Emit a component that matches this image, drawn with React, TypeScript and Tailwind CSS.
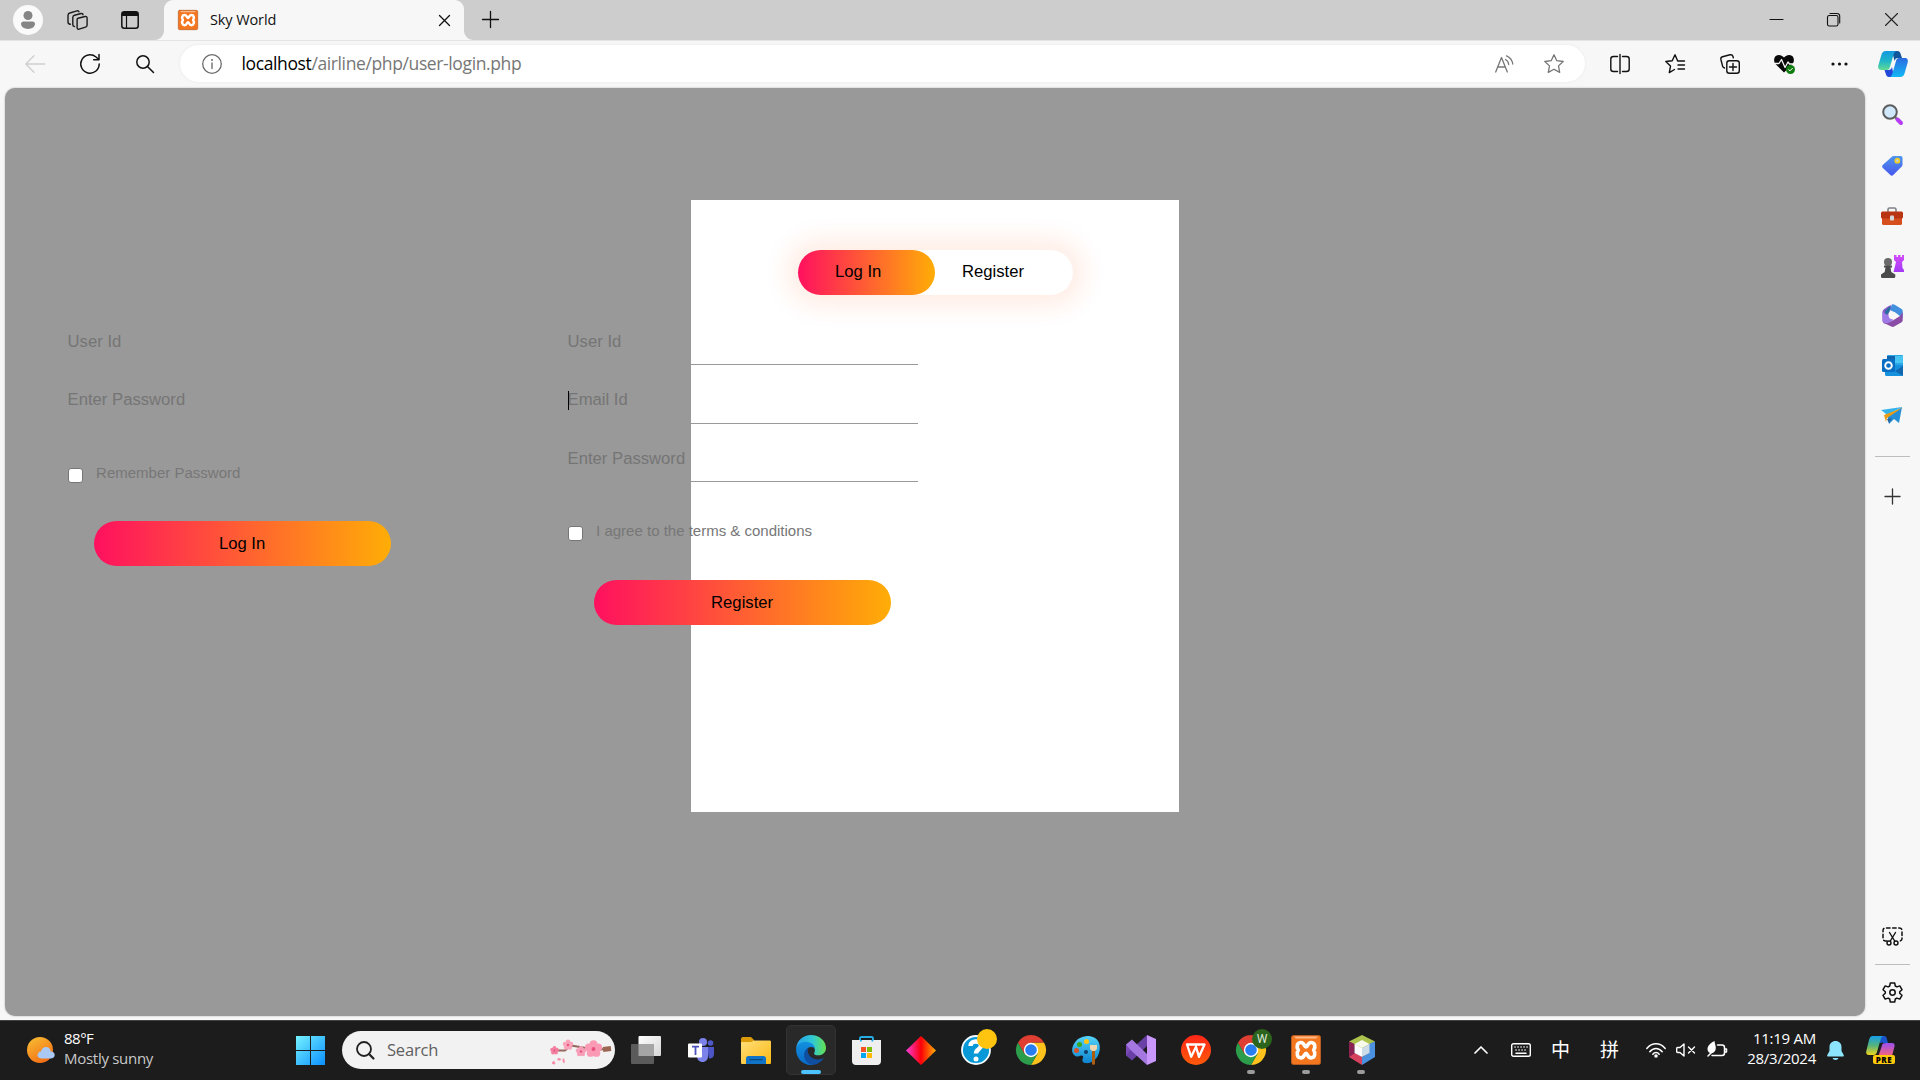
import React from "react";

type IconProps = { w: number; h: number; children: React.ReactNode; className?: string; box?: string };

function Icon({ w, h, children, className = "", box }: IconProps) {
  return (
    <svg
      width={w}
      height={h}
      viewBox={box ?? `0 0 ${w} ${h}`}
      fill="none"
      stroke="none"
      strokeLinecap="round"
      strokeLinejoin="round"
      className={`block shrink-0 overflow-visible ${className}`}
    >
      {children}
    </svg>
  );
}

function XamppIcon({ size }: { size: number }) {
  return (
    <Icon w={size} h={size} box="0 0 30 30">
      <rect x="0.5" y="0.5" width="29" height="29" rx="2" fill="#f4771f" stroke="#b65c22" />
      <path d="M3 1.500h24l-2 2H5z" fill="#fbb98a" />
      <path
        d="M15 12C13.300 12 13.500 7.500 10 7.500 6.300 7.500 5 11.500 7.300 15 5 18.500 6.300 22.800 10 22.800 13.500 22.800 13.300 18.300 15 18.300 16.700 18.300 16.500 22.800 20 22.800 23.700 22.800 25 18.500 22.700 15 25 11.500 23.700 7.500 20 7.500 16.500 7.500 16.700 12 15 12z"
        stroke="#fff"
        strokeWidth="3.700"
      />
    </Icon>
  );
}

function ChromeIcon() {
  return (
    <Icon w={30} h={30}>
      <path d="M15 7.500h13A15 15 0 0 1 15 30l6.500-11.200z" fill="#fdc21c" />
      <path d="M8.500 18.800 2 7.500A15 15 0 0 0 15 30l6.500-11.200z" fill="#2c9e4b" />
      <path d="M2 7.500 8.500 18.800 15 15V7.500h13A15 15 0 0 0 2 7.500z" fill="#df3f32" />
      <circle cx="15" cy="15" r="7.200" fill="#fff" />
      <circle cx="15" cy="15" r="5.800" fill="#287df0" />
    </Icon>
  );
}

function CopilotIcon() {
  return (
    <Icon w={30} h={26}>
      <defs>
        <linearGradient id="cpa" x1="0" y1="0" x2="0" y2="1">
          <stop stopColor="#1498df" />
          <stop offset=".55" stopColor="#22b7c7" />
          <stop offset="1" stopColor="#62dc92" />
        </linearGradient>
        <linearGradient id="cpb" x1="0" y1="0" x2="0" y2="1">
          <stop stopColor="#2b6be0" />
          <stop offset="1" stopColor="#12b8f5" />
        </linearGradient>
      </defs>
      <path d="M14 0h5.500c1.800 0 2.500 1 3 2.500L24 7h-4c-2 0-3 1-3.500 3z" fill="#14569c" />
      <path d="M16 26h-5c-1.800 0-2.500-1-3-2.500L6.500 19h4c2 0 3-1 3.500-3z" fill="#2148d8" />
      <path d="M8 0h11c-2 0-2.800 1.500-3.400 3.400L12 16c-.6 2-1.500 3-3.500 3H3.300C.5 19-.3 17 .3 14.600l2.900-10C4 1.500 5 0 8 0z" fill="url(#cpa)" />
      <path d="M22 26H11c2 0 2.800-1.500 3.400-3.400L18 10c.6-2 1.500-3 3.500-3h5.200c2.800 0 3.600 2 3 4.400l-2.900 10C26 24.500 25 26 22 26z" fill="url(#cpb)" />
    </Icon>
  );
}

function WindowTop() {
  return (
    <div className="flex h-10 shrink-0 items-stretch bg-[#cdcdcd]">
      <div className="flex w-[164px] items-center pl-[13px]">
        <Icon w={30} h={30}>
          <circle cx="15" cy="15" r="15" fill="#fafafa" />
          <circle cx="15" cy="10.500" r="4.500" fill="#858585" />
          <path d="M10.500 16.500h9c1.500 0 2.500 1 2.500 2.300 0 3-3 5.200-7 5.200s-7-2.200-7-5.200c0-1.300 1-2.300 2.500-2.300z" fill="#858585" />
        </Icon>
        <Icon w={21} h={20} className="ml-6">
          <g stroke="#1b1b1b" strokeWidth="1.400">
            <path d="m11 8.200 7.200-1.700c1.200-.3 1.900.3 1.900 1.500v7c0 1.200-.5 1.800-1.500 2.100l-6.500 2c-1.200.4-2-.2-2-1.400V9.500c0-.8.200-1.200.9-1.300z" />
            <path d="M7.500 16.500c-1.200 0-1.700-.6-1.700-1.700V7.500c0-1.300.5-2 1.700-2.300l6.500-1.700c1-.2 1.800.2 2 1.200" />
            <path d="M3.300 14.300c-1.500-.2-2.300-.8-2.300-2V5.500c0-1.300.6-2.200 1.800-2.500L10 .9c1-.3 1.700.1 2 1" />
          </g>
        </Icon>
        <Icon w={18} h={18} className="ml-[33px]">
          <rect x=".8" y=".8" width="16.400" height="16.400" rx="2.500" stroke="#111" strokeWidth="1.500" />
          <path d="M1 4V2.500C1 1.500 1.700 1 2.500 1h13c1 0 1.500.6 1.500 1.500V5H1z" fill="#111" />
          <path d="M5.500 5v12" stroke="#111" strokeWidth="1.200" />
        </Icon>
      </div>
      <div className="relative flex w-[300px] items-center rounded-t-[9px] bg-[#f7f7f7] pl-[14px] pr-[14px]">
        <svg className="absolute bottom-0 -left-[9px]" width="9" height="9">
          <path d="M9 0v9H0a9 9 0 0 0 9-9z" fill="#f7f7f7" />
        </svg>
        <svg className="absolute bottom-0 -right-[9px]" width="9" height="9">
          <path d="M0 0v9h9a9 9 0 0 1-9-9z" fill="#f7f7f7" />
        </svg>
        <XamppIcon size={20} />
        <span className="ml-3 text-[14.500px] tracking-[-0.100px] text-[#111]">Sky World</span>
        <Icon w={11} h={11} className="ml-auto">
          <path d="m.5.500 10 10m0-10-10 10" stroke="#111" strokeWidth="1.300" />
        </Icon>
      </div>
      <Icon w={17} h={17} className="ml-[18px] mt-[11px]">
        <path d="M8.500.500v16m-8-8h16" stroke="#111" strokeWidth="1.300" />
      </Icon>
      <div className="ml-auto flex items-center pr-[22px] pb-px">
        <Icon w={13} h={13}>
          <path d="M0 6.500h13" stroke="#111" strokeWidth="1.100" />
        </Icon>
        <Icon w={13} h={13} className="ml-11">
          <rect x=".5" y="2.500" width="10.500" height="10.500" rx="1.800" stroke="#111" strokeWidth="1.100" />
          <path d="M3 .5h7a2.600 2.600 0 0 1 2.700 2.700V10" stroke="#111" strokeWidth="1.100" />
        </Icon>
        <Icon w={13} h={13} className="ml-[45px]">
          <path d="m.5.500 12 12m0-12-12 12" stroke="#222" strokeWidth="1.100" />
        </Icon>
      </div>
    </div>
  );
}

function Slot({ className, children }: { className: string; children: React.ReactNode }) {
  return <div className={`flex shrink-0 items-center justify-center ${className}`}>{children}</div>;
}

function Toolbar() {
  return (
    <div className="flex h-12 shrink-0 items-center border-t border-[#e4e4e4] bg-[#f7f7f7] pb-[2px]">
      <Slot className="ml-[10px] w-[50px]">
        <Icon w={20} h={18}>
          <path d="M19.500 9H.8M9 .8.800 9 9 17.200" stroke="#cfcfcf" strokeWidth="1.400" />
        </Icon>
      </Slot>
      <Slot className="w-[60px]">
        <Icon w={20} h={20}>
          <path d="M19.200 10A9.200 9.200 0 1 1 16 3l2.800 2.500M19 .5v5.300h-5.300" stroke="#111" strokeWidth="1.500" />
        </Icon>
      </Slot>
      <Slot className="w-[50px]">
        <Icon w={18} h={18}>
          <circle cx="7" cy="7" r="6.200" stroke="#111" strokeWidth="1.500" />
          <path d="m11.500 11.500 6 6" stroke="#111" strokeWidth="1.500" />
        </Icon>
      </Slot>
      <div className="ml-[10px] flex h-[37px] w-[1405px] items-center rounded-full bg-white pl-[22px] shadow-[0_0_3px_#e8e8e8]">
        <Icon w={20} h={20}>
          <circle cx="10" cy="10" r="9.300" stroke="#6e6e6e" strokeWidth="1.300" />
          <path d="M10 9v5.500" stroke="#6e6e6e" strokeWidth="1.400" />
          <circle cx="10" cy="6" r="1" fill="#6e6e6e" />
        </Icon>
        <span className="ml-[19.500px] text-[17.500px] tracking-[-0.380px] text-[#767676]">
          <span className="text-black">localhost</span>/airline/php/user-login.php
        </span>
        <div className="ml-auto flex items-center pr-[21px]">
          <Icon w={19} h={18} className="mr-[30px]">
            <path d="M.7 17 6.500 2.500 12.300 17M2.700 12h7.600" stroke="#767676" strokeWidth="1.300" />
            <path d="M10.500 4.500c2 1 3 2.700 3.200 5M11.500.800c3.600 1.500 5.700 4.500 6.300 8.200" stroke="#767676" strokeWidth="1.300" />
          </Icon>
          <Icon w={20} h={20}>
            <path d="m10 .8 2.800 5.900 6.400.8-4.700 4.400 1.200 6.500-5.700-3.200-5.700 3.200 1.200-6.500L.8 7.500l6.400-.8z" stroke="#767676" strokeWidth="1.300" />
          </Icon>
        </div>
      </div>
      <Slot className="ml-[7px] w-[55px]">
        <Icon w={20} h={20}>
          <path d="M7.500 2.500h-4C1.800 2.500.8 3.500.8 5v10c0 1.500 1 2.500 2.700 2.500h4M12.500 2.500h4c1.700 0 2.700 1 2.700 2.500v10c0 1.500-1 2.500-2.700 2.500h-4M10 .5v19" stroke="#111" strokeWidth="1.400" />
        </Icon>
      </Slot>
      <Slot className="w-[55px]">
        <Icon w={20} h={20}>
          <path d="M12.700 7 10 .8 7.200 6.700.8 7.500l4.700 4.600-1.200 6.500L9.500 15.500M13.500 7h6M13 11h6.500M13 15h6.500" stroke="#111" strokeWidth="1.400" />
        </Icon>
      </Slot>
      <Slot className="w-[55px]">
        <Icon w={20} h={20}>
          <rect x="6.800" y="6.800" width="12.500" height="12.500" rx="2.500" stroke="#111" strokeWidth="1.400" />
          <path d="M13 9.500v7M9.500 13h7M4.500 14c-1-.2-1.700-.8-1.900-1.800L.9 5.500C.600 4 1.200 3 2.500 2.700L10 .8c1.500-.3 2.600.3 3 1.700l.3 1.300" stroke="#111" strokeWidth="1.400" />
        </Icon>
      </Slot>
      <Slot className="w-[55px]">
        <Icon w={21} h={20}>
          <path d="M10 18.500 1.500 10C-.5 7.500-.3 4 1.800 2 4.200.200 7.500.500 10 3.500 12.500.500 15.800.200 18.200 2c2.100 2 2.300 5.500.3 8z" fill="#080808" />
          <path d="M1 9.500h4l2.500-4 3.500 8 3-5.500 1.500 2H19" stroke="#f7f7f7" strokeWidth="1.300" />
          <circle cx="16.500" cy="15.500" r="4.500" fill="#107c10" />
          <path d="m14.700 15.700 1.200 1.200 2.500-2.600" stroke="#fff" strokeWidth="1" />
        </Icon>
      </Slot>
      <Slot className="w-[55px]">
        <Icon w={17} h={4}>
          <circle cx="2" cy="2" r="1.600" fill="#111" />
          <circle cx="8.500" cy="2" r="1.600" fill="#111" />
          <circle cx="15" cy="2" r="1.600" fill="#111" />
        </Icon>
      </Slot>
      <Slot className="w-[51px]">
        <CopilotIcon />
      </Slot>
    </div>
  );
}

function GradientButton({ label }: { label: string }) {
  return (
    <button className="ml-[26px] h-[45px] w-[297px] rounded-full bg-[linear-gradient(to_right,#ff105f,#ffad06)] text-[16.670px] text-black">
      {label}
    </button>
  );
}

function Field({ label, caret = false }: { label: string; caret?: boolean }) {
  return (
    <div className="flex h-[58.670px] w-[350px] items-end border-b border-[#999]">
      <div className="relative mb-[11.400px] h-[23px] leading-[23px]">
        {caret && <span className="absolute left-[0.400px] top-[3px] h-[19px] w-px bg-black" />}
        {label}
      </div>
    </div>
  );
}

function Form({ fields, check, action, caretAt }: { fields: string[]; check: string; action: string; caretAt?: number }) {
  return (
    <form className="w-[350px] text-[16.670px] text-[#757575]">
      {fields.map((f, i) => (
        <Field key={f} label={f} caret={i === caretAt} />
      ))}
      <div className="mt-[37px] flex h-[38px] items-start">
        <span className="mt-[7px] h-[15px] w-[15px] rounded-[3px] border border-[#767676] bg-white" />
        <span className="mt-px ml-[13.500px] text-[15px] leading-[22px] text-[#777]">{check}</span>
      </div>
      <div className="mt-[22.500px]">
        <GradientButton label={action} />
      </div>
    </form>
  );
}

function PageView() {
  return (
    <main className="relative ml-[5px] mb-1 w-[1860px] overflow-hidden rounded-[10px] bg-[#999] pt-[112px] font-['Liberation_Sans',Arial,sans-serif] shadow-[0_0_2px_#aaa]">
      <section className="ml-[686px] h-[612px] w-[488px] bg-white pt-[50px]">
        <div className="mx-auto flex h-[45px] w-[275px] rounded-full text-[16.670px] text-black shadow-[0_0_25px_11px_#ff61241f]">
          <div className="h-[45px] w-[137px] rounded-full bg-[linear-gradient(to_right,#ff105f,#ffad06)] pl-[37.500px] leading-[43px]">Log In</div>
          <div className="pl-[27.500px] leading-[43px]">Register</div>
        </div>
      </section>
      <div className="absolute left-[62.600px] top-[218.300px] flex gap-[150px]">
        <Form fields={["User Id", "Enter Password"]} check="Remember Password" action="Log In" />
        <Form fields={["User Id", "Email Id", "Enter Password"]} check="I agree to the terms & conditions" action="Register" caretAt={1} />
      </div>
    </main>
  );
}

function Sidebar() {
  return (
    <aside className="flex w-[54px] flex-col items-center">
      <Slot className="mt-1 h-[44px]">
        <Icon w={21} h={21}>
          <path d="m13 13 2 2" stroke="#777" strokeWidth="2.500" />
          <path d="m15.500 15.500 3.500 3.500" stroke="#b53cf4" strokeWidth="4" />
          <circle cx="8" cy="8" r="6.800" fill="#cfe8fb" stroke="#5d5d5d" strokeWidth="2" />
        </Icon>
      </Slot>
      <Slot className="mt-[7px] h-[44px]">
        <Icon w={21} h={21}>
          <defs>
            <linearGradient id="tag" x1="0" y1="0" x2="0" y2="1">
              <stop stopColor="#4f96ec" />
              <stop offset="1" stopColor="#4656ed" />
            </linearGradient>
          </defs>
          <path d="M12 1h6.500c1.500 0 2 .7 2 2v6.500c0 1-.3 1.600-1 2.300l-8 8c-1.200 1.200-2.200 1.200-3.400 0L.9 13c-1.100-1.200-1-2.200.1-3.300l8.300-7.500C10.200 1.300 11 1 12 1z" fill="url(#tag)" />
          <circle cx="15.300" cy="5.700" r="2" fill="#b5d5ff" stroke="#f4cf23" strokeWidth="1.800" />
        </Icon>
      </Slot>
      <Slot className="mt-[7px] h-[44px]">
        <Icon w={22} h={18}>
          <path d="M7 5V2.500C7 1.500 7.600 1 8.500 1h5c.9 0 1.500.5 1.500 1.500V5" stroke="#7d8287" strokeWidth="1.600" />
          <rect x="1" y="8" width="20" height="10" rx="1.500" fill="#d74e1d" />
          <rect x="0" y="4.500" width="22" height="7" rx="1.500" fill="#b93413" />
          <rect x="9" y="8.500" width="4" height="5" rx="1" fill="#d5d7d9" />
        </Icon>
      </Slot>
      <Slot className="mt-[6px] h-[44px]">
        <Icon w={23} h={23}>
          <defs>
            <linearGradient id="rook" x1="0" y1="0" x2="0" y2="1">
              <stop stopColor="#d24dfb" />
              <stop offset="1" stopColor="#a43af3" />
            </linearGradient>
          </defs>
          <path d="M13 0h2.500v2H17V0h2.500v2H21V0h2v5l-2 2 .5 6 1.500 2v2H12.500l1-4 1.500-6-2-2z" fill="url(#rook)" />
          <circle cx="7" cy="7" r="4" fill="#6a6a6a" />
          <path d="M3 10.500h8v2H9.500l.8 4.500 4 2.500v2c0 .8-.5 1.500-1.500 1.500H1.500C.5 23 0 22.300 0 21.500v-2L3.700 17l.8-4.500H3z" fill="#4b4b4b" />
        </Icon>
      </Slot>
      <Slot className="mt-[5px] h-[44px]">
        <Icon w={21} h={23}>
          <path d="M10 .5c-5 2.500-9.500 5-9.500 7v9c0 2 1 2.500 2.500 3.200L6.500 18V9.500c0-2 1-3 2.500-3.700V2z" fill="#8b58cc" />
          <path d="M10 .5c1-.4 1.800-.2 2.700.3l6.500 3.900c1 .6 1.500 1.500 1.500 2.600v7L14 9 8 6z" fill="#438fdf" />
          <path d="M20.700 8v8c0 1-.5 1.900-1.500 2.500l-7 4c-1 .6-2 .6-3 0L2 19l8-2 8-5z" fill="#8b4ca6" />
          <path d="M6.800 3C10 1 8 4 7.500 8L3 12V7z" fill="#286e9f" />
          <path d="M.5 8v8c0 2 1.700 3.200 3 3.200 2.800.2 4-.7 8-3.200L7 12z" fill="#9f79e5" />
          <circle cx="10.500" cy="11.500" r="3.800" fill="#f7f7f7" />
        </Icon>
      </Slot>
      <Slot className="mt-[6px] h-[44px]">
        <Icon w={21} h={21}>
          <rect x="5" y="0" width="16" height="13" rx="1" fill="#2aa6e7" />
          <path d="M5 1h8v6H5z" fill="#1065ad" />
          <path d="M13 1h8v7h-8z" fill="#47c5f3" />
          <path d="M3 10h18v9.500c0 .8-.5 1.500-1.500 1.500h-15C3.500 21 3 20.300 3 19.500z" fill="#1591de" />
          <path d="m21 11-8 5 8 5z" fill="#1267b1" />
          <rect x="0" y="4" width="13" height="13" rx="1.500" fill="#086ec4" />
          <circle cx="6.500" cy="10.500" r="3.300" stroke="#fff" strokeWidth="1.900" />
        </Icon>
      </Slot>
      <Slot className="mt-[6px] h-[44px]">
        <Icon w={22} h={17}>
          <path d="M0 3 21 0 6.500 8z" fill="#34b4ee" />
          <path d="m21 0-3 16-5-4-5 5-1.500-8z" fill="#248ed9" />
          <path d="M21 1 6 11l-1 4-2-7z" fill="#e99d17" />
          <path d="m6 12 2 4 3-5z" fill="#28649e" />
        </Icon>
      </Slot>
      <div className="mt-[19px] h-px w-[35px] bg-[#bdbdbd]" />
      <Icon w={15} h={15} className="mt-8">
        <path d="M7.500 0v15M0 7.500h15" stroke="#333" strokeWidth="1.300" />
      </Icon>
      <Icon w={21} h={19} className="mt-auto">
        <path d="M5 14H3.500C2 14 1 13 1 11.500v-8C1 2 2 1 3.500 1h14C19 1 20 2 20 3.500v8c0 1.500-1 2.500-2.500 2.500H16.500" stroke="#111" strokeWidth="1.500" strokeDasharray="3.500 2.600" />
        <path d="m7.500 5.500 5.200 8.500m.8-8.500L8.300 14" stroke="#111" strokeWidth="1.400" />
        <circle cx="7" cy="16" r="2" stroke="#111" strokeWidth="1.400" />
        <circle cx="14" cy="16" r="2" stroke="#111" strokeWidth="1.400" />
      </Icon>
      <div className="mt-[18px] h-px w-[35px] bg-[#bdbdbd]" />
      <Icon w={21} h={21} className="mt-[17px] mb-[17px]">
        <path d="M8.300 1h4.400l.6 3 1.600.9 2.900-1L20 7.700l-2.300 2v1.600l2.300 2-2.200 3.800-2.900-1-1.600.9-.6 3H8.300l-.6-3-1.600-.9-2.900 1L1 13.300l2.300-2V9.700L1 7.700l2.200-3.800 2.900 1L7.700 4z" stroke="#111" strokeWidth="1.500" />
        <circle cx="10.500" cy="10.500" r="2.700" stroke="#111" strokeWidth="1.500" />
      </Icon>
    </aside>
  );
}

function Blossom({ x, y, r, color }: { x: number; y: number; r: number; color: string }) {
  return (
    <g fill={color}>
      {[0, 72, 144, 216, 288].map((a) => (
        <circle key={a} cx={x + Math.sin((a * Math.PI) / 180) * r * 0.55} cy={y - Math.cos((a * Math.PI) / 180) * r * 0.55} r={r * 0.43} />
      ))}
      <circle cx={x} cy={y} r={r * 0.22} fill="#e9527d" />
    </g>
  );
}

function SearchPill() {
  return (
    <div className="ml-[17px] flex h-[38px] w-[273px] items-center rounded-full bg-[#f2f2f2] pl-[14px]">
      <Icon w={18} h={18}>
        <circle cx="8" cy="8" r="7" stroke="#222" strokeWidth="1.800" />
        <path d="m13 13 4.500 4.500" stroke="#222" strokeWidth="2.200" />
      </Icon>
      <span className="ml-[13px] text-[16.500px] tracking-[-0.200px] text-[#606060]">Search</span>
      <Icon w={62} h={25} className="ml-auto mr-[3px] mt-[4px]">
        <path d="M3 10.500h12l6-5 12 2 9 2M48 10l6-1" stroke="#96675a" strokeWidth="1.800" />
        <path d="M53 9.500l8-1" stroke="#9b6652" strokeWidth="5" strokeLinecap="butt" />
        <Blossom x={4.500} y={10.500} r={4.500} color="#f27f9f" />
        <Blossom x={18} y={5} r={5.500} color="#f9a5bb" />
        <Blossom x={31} y={11.500} r={5.500} color="#f79fb8" />
        <Blossom x={43.500} y={9} r={9} color="#fa9ab5" />
        <path d="M2 24c0-3 2-4 3-2s0 3-3 2zm5-5c2-2 4-1 4 1-2 1-3 1-4-1zm6-1c2 1 2.500 4 1 5.500-1.500-1.500-2-3.500-1-5.500z" fill="#f78eac" />
      </Icon>
    </div>
  );
}

function AppCell({ children, state }: { children: React.ReactNode; state?: "active" | "open" }) {
  return (
    <div className="flex w-[55px] shrink-0 justify-center">
      <div
        className={
          state === "active"
            ? "relative flex h-[50px] w-[50px] items-center justify-center rounded-[5px] border border-[#333] bg-[#292929]"
            : "relative flex h-[50px] w-[50px] items-center justify-center"
        }
      >
        {children}
        {state === "active" && <span className="absolute bottom-0 left-[14px] h-1 w-5 rounded-full bg-[#4cc2ff]" />}
        {state === "open" && <span className="absolute bottom-px left-[21px] h-1 w-2 rounded-full bg-[#9b9b9b]" />}
      </div>
    </div>
  );
}

function TaskApps() {
  return (
    <div className="ml-[3.500px] flex items-center">
      <AppCell>
        <Icon w={30} h={28}>
          <defs>
            <linearGradient id="tv" x1="0" y1="0" x2="1" y2="1">
              <stop stopColor="#fff" />
              <stop offset="1" stopColor="#d5d5d5" />
            </linearGradient>
          </defs>
          <rect x="7.500" y="0" width="22.500" height="20" rx="1" fill="url(#tv)" />
          <rect x="0" y="8" width="23" height="20" rx="1" fill="#5b5b5b" />
          <rect x="7.500" y="8" width="15.500" height="12" fill="#a5a5a5" />
        </Icon>
      </AppCell>
      <AppCell>
        <Icon w={26} h={24}>
          <circle cx="22.500" cy="5" r="2.800" fill="#5059c9" />
          <path d="M19 9h7v7c0 3-2 4.500-5 4.500z" fill="#4c55c4" />
          <circle cx="15" cy="4" r="4" fill="#7b83eb" />
          <path d="M9 9h11v9c0 3.500-2 6-5.500 6S9 21.500 9 18z" fill="#7b83eb" />
          <rect x="0" y="5.500" width="14" height="14" rx="1" fill="#fff" />
          <path d="M4 8.700h7M7.500 9v8" stroke="#4a52bb" strokeWidth="1.800" strokeLinecap="butt" />
        </Icon>
      </AppCell>
      <AppCell>
        <Icon w={30} h={27}>
          <defs>
            <linearGradient id="fold" x1="0" y1="0" x2="1" y2="1">
              <stop stopColor="#ffdf7a" />
              <stop offset="1" stopColor="#fcb913" />
            </linearGradient>
          </defs>
          <path d="M0 2c0-1 .7-2 2-2h8l3 3v8H0z" fill="#dc9b08" />
          <path d="M0 6c0-.6.500-1 1-1h9l3-1.500h15.500c1 0 1.500.5 1.500 1.500v20.500c0 1-.5 1.500-1.500 1.500h-27C.5 27 0 26.500 0 25.500z" fill="url(#fold)" />
          <path d="M5 27v-5.500c0-1.500 1-2.500 2.500-2.500h15c1.500 0 2.500 1 2.500 2.500V27z" fill="#1173c5" />
          <path d="M9 22.700h12" stroke="#084a84" strokeWidth="1.200" />
        </Icon>
      </AppCell>
      <AppCell state="active">
        <Icon w={30} h={30}>
          <defs>
            <linearGradient id="e1" x1="0" y1="0" x2="1" y2="0">
              <stop stopColor="#279fe8" />
              <stop offset=".55" stopColor="#30c8d4" />
              <stop offset="1" stopColor="#65e34d" />
            </linearGradient>
            <linearGradient id="e2" x1="0" y1="0" x2="0" y2="1">
              <stop stopColor="#1291df" />
              <stop offset="1" stopColor="#0969c8" />
            </linearGradient>
          </defs>
          <path d="M.2 13C1 5.500 7 0 15 0c8.500 0 15 6 15 13 0 4.500-3.500 7.300-7.500 7.300-3.200 0-5-1-4.200-2.600 2-4-.8-7.700-5.300-7.700C7 10 2 12 .2 13z" fill="url(#e1)" />
          <path d="M.2 13C1.700 9 5 6.700 10 6.700c5.500 0 9 3.800 9 7.300 0 0-1-2-4-2-3.500 0-5.500 3-5.500 6.500 0 5 4 8.500 8.500 10-.8.800-2 1.500-3 1.500C6 30-.8 22 .2 13z" fill="url(#e2)" />
          <path d="M12.500 13C9.500 14 8 17 8 20c0 5 4.500 10 9.500 9.700 5-.4 8.500-3.700 10.200-6.700-6 3-12.700 1-15.200-4-.9-2-.9-4 0-6z" fill="#104f9f" />
        </Icon>
      </AppCell>
      <AppCell>
        <Icon w={29} h={29}>
          <path d="M8 6V2.500C8 1.600 8.500 1 9.500 1h10c1 0 1.500.6 1.500 1.500V6" stroke="#24aee5" strokeWidth="1.900" />
          <path d="M0 4h29v21c0 2.500-1.500 4-4 4H4c-2.500 0-4-1.500-4-4z" fill="#efefef" />
          <path d="M8 4h1.800v1.500H8zM19.500 4h1.800v1.500h-1.800z" fill="#24aee5" />
          <path d="M9 11h5v5H9z" fill="#f35325" />
          <path d="M15 11h5v5h-5z" fill="#81bc06" />
          <path d="M9 17h5v5H9z" fill="#05a6f0" />
          <path d="M15 17h5v5h-5z" fill="#ffba08" />
        </Icon>
      </AppCell>
      <AppCell>
        <Icon w={30} h={29}>
          <defs>
            <linearGradient id="dia">
              <stop stopColor="#fa3ddc" />
              <stop offset=".5" stopColor="#fb0008" />
              <stop offset="1" stopColor="#ffb000" />
            </linearGradient>
          </defs>
          <path d="m15 0 15 14.500L15 29 0 14.500z" fill="url(#dia)" />
        </Icon>
      </AppCell>
      <AppCell>
        <Icon w={30} h={30}>
          <circle cx="15" cy="15" r="14" fill="#0798d8" stroke="#f3fbff" strokeWidth="1.800" />
          <path d="M9.500 11c0-6 10.500-6 10.500-.5 0 4-5 3.500-5 8" stroke="#fff" strokeWidth="4.500" strokeLinecap="butt" />
          <circle cx="15" cy="24" r="2.500" fill="#fff" />
          <circle cx="26" cy="4" r="10" fill="#ffc40f" />
        </Icon>
      </AppCell>
      <AppCell>
        <ChromeIcon />
      </AppCell>
      <AppCell>
        <Icon w={28} h={29}>
          <defs>
            <linearGradient id="pnt" x1="0" y1="0" x2="0" y2="1">
              <stop stopColor="#55d4fa" />
              <stop offset="1" stopColor="#0d83cf" />
            </linearGradient>
          </defs>
          <path d="M17 0C26 1 29 8 27.500 15 26 23 20 28 13 27c-3-.5-3-3-2-5 .8-2-1-3-3-2-2 .8-4 .7-6-1-4-4-1-12 4-16C10 .5 14-.3 17 0z" fill="url(#pnt)" />
          <circle cx="4.500" cy="14.500" r="2.500" fill="#d9532a" />
          <circle cx="7.500" cy="8.500" r="2.500" fill="#35a721" />
          <circle cx="14.500" cy="5.500" r="2.500" fill="#fdc413" />
          <circle cx="14" cy="16" r="2" fill="#103d63" />
          <path d="M20 14h3v14c0 1-3 1-3 0z" fill="#ad5d10" />
          <path d="M18 9h7v4l-2 2h-3l-2-2z" fill="#eed7b0" />
        </Icon>
      </AppCell>
      <AppCell>
        <Icon w={30} h={30}>
          <path d="M0 9.500 4.500 7v15.500L0 20.500z" fill="#7b4ab8" />
          <path d="m0 20.500 6 5L21 11V0L4.500 15z" fill="#6840a6" />
          <path d="M0 9.500 6 4.500 21 19v11L4.500 15z" fill="#a477e1" />
          <path d="m21 0 9 4v22l-9 4z" fill="#c997fb" />
        </Icon>
      </AppCell>
      <AppCell>
        <Icon w={30} h={30}>
          <defs>
            <linearGradient id="wps" x1="0" y1="0" x2="0" y2="1">
              <stop stopColor="#ff2618" />
              <stop offset="1" stopColor="#ff5a09" />
            </linearGradient>
          </defs>
          <circle cx="15" cy="15" r="15" fill="url(#wps)" />
          <path d="M6 9.500h13M6 9.500l4.200 12.300 4.800-10 3 10 5.500-12.300h-3" stroke="#fff" strokeWidth="2.300" />
        </Icon>
      </AppCell>
      <AppCell state="open">
        <ChromeIcon />
        <span className="absolute left-[26px] top-[4px] flex h-5 w-5 items-center justify-center rounded-full bg-[#2c641d] font-['Roboto',sans-serif] text-[12px] text-[#dfe8dc]">W</span>
      </AppCell>
      <AppCell state="open">
        <XamppIcon size={30} />
      </AppCell>
      <AppCell state="open">
        <Icon w={26} h={30} className="ml-px">
          <path d="m13 0 13 6.500-13 7-13-7z" fill="#acc34e" />
          <path d="M0 6.500V22l5.500-3V9z" fill="#8a2352" />
          <path d="M0 22l13 8v-8l-7-4z" fill="#d7425f" />
          <path d="M26 6.500V22l-13 8v-8l7-4V9z" fill="#4b91df" />
          <path d="m13 5 7.500 4-7.500 4-7.500-4z" fill="#f7f9e9" />
          <path d="M5.500 9 13 13v9l-7.500-4z" fill="#fff" />
          <path d="m20.500 9-7.500 4v9l7.500-4z" fill="#cddce9" />
        </Icon>
      </AppCell>
    </div>
  );
}

function Tray() {
  return (
    <div className="ml-auto flex items-center text-white">
      <Icon w={14} h={8}>
        <path d="m1 7 6-6 6 6" stroke="#fff" strokeWidth="1.700" />
      </Icon>
      <Icon w={20} h={14} className="ml-[23px]">
        <rect x=".7" y=".7" width="18.600" height="12.600" rx="1.800" stroke="#fff" strokeWidth="1.400" />
        <path d="M4 4h.1M7 4h.1M10 4h.1M13 4h.1M16 4h.1M5 7h.1M8 7h.1M11 7h.1M14 7h.1M5 10.300h10" stroke="#fff" strokeWidth="1.500" />
      </Icon>
      <span className="ml-[20px] -mt-[2px] w-5 text-[19px] leading-6 font-['Noto_Sans_CJK_SC',sans-serif]">中</span>
      <span className="ml-[29px] -mt-[2px] w-5 text-[19px] leading-6 font-['Noto_Sans_CJK_SC',sans-serif]">拼</span>
      <Icon w={20} h={15} className="ml-[26px]">
        <path d="M.8 5.500C6-.7 14-.7 19.200 5.500M3.800 8.700c3.500-4.300 8.900-4.300 12.400 0M6.800 11.200c1.800-2.200 4.600-2.200 6.400 0" stroke="#fff" strokeWidth="1.500" />
        <circle cx="10" cy="13" r="1.800" fill="#fff" />
      </Icon>
      <Icon w={20} h={14} className="ml-[10px]">
        <path d="M8 .9v12.200L4 9.500H1.500c-.5 0-.8-.3-.8-.8V5.300c0-.5.300-.8.800-.8H4zM12.500 4l6 6m0-6-6 6" stroke="#fff" strokeWidth="1.400" />
      </Icon>
      <Icon w={20} h={16} className="ml-[11px] -mt-[2px]">
        <path d="M10.500 4h4.500c1.500 0 2.500 1 2.500 2.500v5.500c0 1.500-1 2.500-2.500 2.500H5M18 8h1.500v3H18M1 15l5-5" stroke="#fff" strokeWidth="1.500" />
        <path d="M7.500 0C8 4 9.500 5.500 8.500 9c-1 3-4 4-6.500 2.500C-1 8.500.5 3 7.500 0z" fill="#fff" />
      </Icon>
      <div className="-mt-[4px] w-[89px] text-right text-[15px] leading-5">
        <div className="tracking-[-0.250px]">11:19 AM</div>
        <div className="tracking-[-0.250px]">28/3/2024</div>
      </div>
      <Icon w={17} h={19} className="ml-[11px]">
        <path d="M8.500 0C5 0 2.500 2.500 2.500 6v4L.3 14c-.4.800 0 1.500.8 1.500h14.800c.8 0 1.200-.7.8-1.500l-2.200-4V6c0-3.500-2.500-6-6-6zM5.500 17h6c-.5 1.300-1.500 2-3 2s-2.500-.7-3-2z" fill="#8ce5fc" />
      </Icon>
      <div className="relative ml-[22px] h-7 w-[30px]">
        <Icon w={29} h={28}>
          <defs>
            <linearGradient id="pa" x1="0" y1="0" x2="0" y2="1">
              <stop stopColor="#159fe9" />
              <stop offset=".5" stopColor="#55b37c" />
              <stop offset="1" stopColor="#eed51d" />
            </linearGradient>
            <linearGradient id="pb" x1="0" y1="0" x2="0" y2="1">
              <stop stopColor="#9b50ef" />
              <stop offset="1" stopColor="#f7647a" />
            </linearGradient>
          </defs>
          <path d="M13 0h5c1.700 0 2.200.8 2.700 2.300L22 7h-8z" fill="#1855cb" />
          <path d="M7 0h11c-2 0-2.700 1.300-3.200 3L11 16c-.6 2-1.400 3-3.400 3H3C.500 19-.3 17 .3 15L3 4c.8-2.700 1.500-4 4-4z" fill="url(#pa)" />
          <path d="M20 7h6c2.300 0 3 1.500 2.500 3.500L26 20H12l3-10c.6-2 2-3 5-3z" fill="url(#pb)" />
          <path d="m16 7-4 12" stroke="#222" strokeWidth="1.500" />
        </Icon>
        <span className="absolute bottom-0 left-[7px] flex h-[9px] w-[22px] items-center justify-center rounded-[2px] bg-[#ffc90c] text-[8px] font-extrabold tracking-[0.500px] text-black">PRE</span>
      </div>
    </div>
  );
}

function Taskbar() {
  return (
    <footer className="flex h-[60px] shrink-0 items-center border-t border-[#404346] bg-[#1c1c1c] pr-6 pb-px">
      <div className="flex w-[296px] items-center pl-[27px]">
        <Icon w={28} h={26}>
          <defs>
            <linearGradient id="sun" x1="0" y1="0" x2=".6" y2="1">
              <stop stopColor="#f8c235" />
              <stop offset="1" stopColor="#f36f15" />
            </linearGradient>
          </defs>
          <circle cx="13" cy="13" r="13" fill="url(#sun)" />
          <path d="M15 21.500c-3 0-4.500-1.500-4.500-3.500s1.500-3.300 3.500-3.500c.5-3 2.500-4.500 5-4.500 2.800 0 4.500 2 4.700 4.500 2.500 0 4 1.300 4 3.500s-1.700 3.500-4 3.500z" fill="#a9c8f4" />
        </Icon>
        <div className="-mt-[4px] ml-[9px] text-[15px] leading-5">
          <div className="tracking-[-0.500px] text-white">88°F</div>
          <div className="tracking-[-0.280px] text-[#c9c9c9]">Mostly sunny</div>
        </div>
      </div>
      <Icon w={29} h={29}>
        <defs>
          <linearGradient id="win" x1="0" y1="0" x2="29" y2="29" gradientUnits="userSpaceOnUse">
            <stop stopColor="#75f2ff" />
            <stop offset="1" stopColor="#0a8fff" />
          </linearGradient>
        </defs>
        <path d="M0 0h14v14H0zM15 0h14v14H15zM0 15h14v14H0zM15 15h14v14H15z" fill="url(#win)" />
      </Icon>
      <SearchPill />
      <TaskApps />
      <Tray />
    </footer>
  );
}

export default function App() {
  return (
    <div className="flex h-[1080px] w-[1920px] flex-col overflow-hidden bg-[#f7f7f7] font-['Open_Sans','Noto_Sans',sans-serif]">
      <WindowTop />
      <Toolbar />
      <div className="flex min-h-0 flex-1">
        <PageView />
        <Sidebar />
      </div>
      <Taskbar />
    </div>
  );
}
